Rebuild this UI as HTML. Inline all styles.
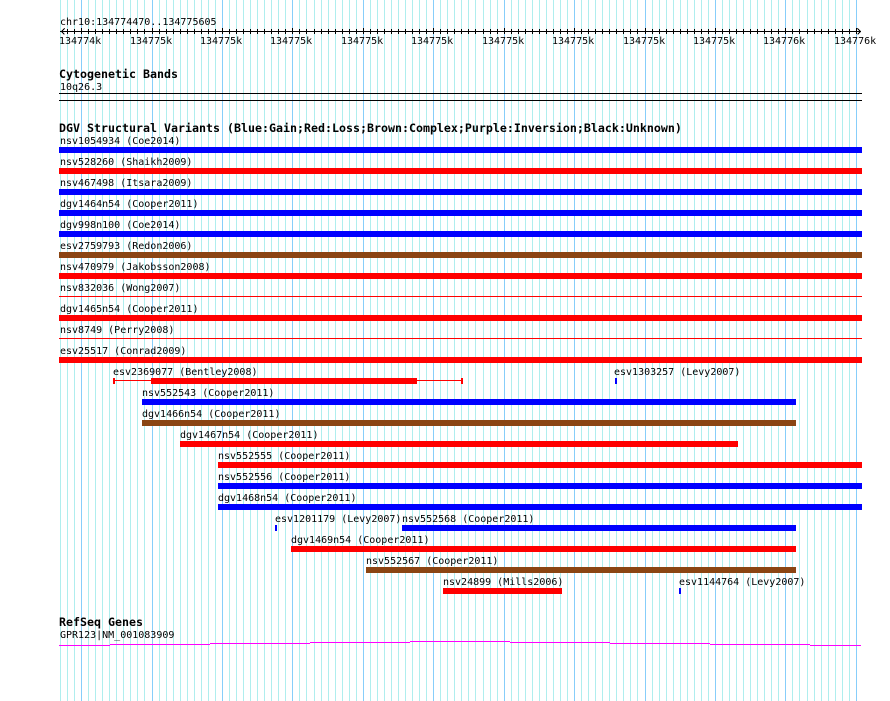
<!DOCTYPE html>
<html><head><meta charset="utf-8"><style>
html,body{margin:0;padding:0;background:#fff;width:890px;height:701px;overflow:hidden}
svg{display:block}
text{font-family:"DejaVu Sans Mono","Liberation Mono",monospace;font-size:10px;fill:#000;text-rendering:optimizeSpeed;-webkit-font-smoothing:none}
text.b{font-weight:bold;font-size:11.63px}
</style></head><body>
<svg width="890" height="701" viewBox="0 0 890 701" shape-rendering="crispEdges">
<path fill="none" stroke="#afeeee" d="M60.5 0V701M67.5 0V701M74.5 0V701M88.5 0V701M95.5 0V701M102.5 0V701M109.5 0V701M116.5 0V701M123.5 0V701M130.5 0V701M137.5 0V701M144.5 0V701M159.5 0V701M166.5 0V701M173.5 0V701M180.5 0V701M187.5 0V701M194.5 0V701M201.5 0V701M208.5 0V701M215.5 0V701M229.5 0V701M236.5 0V701M243.5 0V701M250.5 0V701M257.5 0V701M264.5 0V701M271.5 0V701M278.5 0V701M285.5 0V701M299.5 0V701M306.5 0V701M314.5 0V701M321.5 0V701M328.5 0V701M335.5 0V701M342.5 0V701M349.5 0V701M356.5 0V701M370.5 0V701M377.5 0V701M384.5 0V701M391.5 0V701M398.5 0V701M405.5 0V701M412.5 0V701M419.5 0V701M426.5 0V701M440.5 0V701M447.5 0V701M454.5 0V701M461.5 0V701M468.5 0V701M475.5 0V701M483.5 0V701M490.5 0V701M497.5 0V701M511.5 0V701M518.5 0V701M525.5 0V701M532.5 0V701M539.5 0V701M546.5 0V701M553.5 0V701M560.5 0V701M567.5 0V701M581.5 0V701M588.5 0V701M595.5 0V701M602.5 0V701M609.5 0V701M616.5 0V701M623.5 0V701M630.5 0V701M637.5 0V701M652.5 0V701M659.5 0V701M666.5 0V701M673.5 0V701M680.5 0V701M687.5 0V701M694.5 0V701M701.5 0V701M708.5 0V701M722.5 0V701M729.5 0V701M736.5 0V701M743.5 0V701M750.5 0V701M757.5 0V701M764.5 0V701M771.5 0V701M778.5 0V701M792.5 0V701M799.5 0V701M807.5 0V701M814.5 0V701M821.5 0V701M828.5 0V701M835.5 0V701M842.5 0V701M849.5 0V701"/>
<path fill="none" stroke="#87cefa" d="M81.5 0V701M152.5 0V701M222.5 0V701M292.5 0V701M363.5 0V701M433.5 0V701M504.5 0V701M574.5 0V701M645.5 0V701M715.5 0V701M785.5 0V701M856.5 0V701"/>

<!-- ruler -->
<path fill="none" stroke="#000" d="M60 31.5H861M64.5 28.5L61.5 31.5L64.5 34.5M857.5 28.5L860.5 31.5L857.5 34.5"/>
<path fill="none" stroke="#000" d="M67.5 29V34M74.5 29V34M88.5 29V34M95.5 29V34M102.5 29V34M109.5 29V34M116.5 29V34M123.5 29V34M130.5 29V34M137.5 29V34M144.5 29V34M159.5 29V34M166.5 29V34M173.5 29V34M180.5 29V34M187.5 29V34M194.5 29V34M201.5 29V34M208.5 29V34M215.5 29V34M229.5 29V34M236.5 29V34M243.5 29V34M250.5 29V34M257.5 29V34M264.5 29V34M271.5 29V34M278.5 29V34M285.5 29V34M299.5 29V34M306.5 29V34M314.5 29V34M321.5 29V34M328.5 29V34M335.5 29V34M342.5 29V34M349.5 29V34M356.5 29V34M370.5 29V34M377.5 29V34M384.5 29V34M391.5 29V34M398.5 29V34M405.5 29V34M412.5 29V34M419.5 29V34M426.5 29V34M440.5 29V34M447.5 29V34M454.5 29V34M461.5 29V34M468.5 29V34M475.5 29V34M483.5 29V34M490.5 29V34M497.5 29V34M511.5 29V34M518.5 29V34M525.5 29V34M532.5 29V34M539.5 29V34M546.5 29V34M553.5 29V34M560.5 29V34M567.5 29V34M581.5 29V34M588.5 29V34M595.5 29V34M602.5 29V34M609.5 29V34M616.5 29V34M623.5 29V34M630.5 29V34M637.5 29V34M652.5 29V34M659.5 29V34M666.5 29V34M673.5 29V34M680.5 29V34M687.5 29V34M694.5 29V34M701.5 29V34M708.5 29V34M722.5 29V34M729.5 29V34M736.5 29V34M743.5 29V34M750.5 29V34M757.5 29V34M764.5 29V34M771.5 29V34M778.5 29V34M792.5 29V34M799.5 29V34M807.5 29V34M814.5 29V34M821.5 29V34M828.5 29V34M835.5 29V34M842.5 29V34M849.5 29V34M81.5 28V34M152.5 28V34M222.5 28V34M292.5 28V34M363.5 28V34M433.5 28V34M504.5 28V34M574.5 28V34M645.5 28V34M715.5 28V34M785.5 28V34M856.5 28V34"/>
<text x="60" y="25">chr10:134774470..134775605</text>
<text x="59" y="44">134774k</text><text x="130" y="44">134775k</text><text x="200" y="44">134775k</text><text x="270" y="44">134775k</text><text x="341" y="44">134775k</text><text x="411" y="44">134775k</text><text x="482" y="44">134775k</text><text x="552" y="44">134775k</text><text x="623" y="44">134775k</text><text x="693" y="44">134775k</text><text x="763" y="44">134776k</text><text x="834" y="44">134776k</text>

<!-- cytobands -->
<text class="b" x="59" y="78">Cytogenetic Bands</text>
<text x="60" y="90">10q26.3</text>
<rect x="59" y="93" width="803" height="1" fill="#000"/>
<rect x="59" y="100" width="803" height="1" fill="#000"/>

<!-- DGV -->
<text class="b" x="59" y="132">DGV Structural Variants (Blue:Gain;Red:Loss;Brown:Complex;Purple:Inversion;Black:Unknown)</text>
<g fill="#00f">
<rect x="59" y="147" width="803" height="6"/><rect x="59" y="189" width="803" height="6"/><rect x="59" y="210" width="803" height="6"/><rect x="59" y="231" width="803" height="6"/>
<rect x="615" y="378" width="2" height="6"/><rect x="142" y="399" width="654" height="6"/><rect x="218" y="483" width="644" height="6"/><rect x="218" y="504" width="644" height="6"/><rect x="275" y="525" width="2" height="6"/><rect x="402" y="525" width="394" height="6"/><rect x="679" y="588" width="2" height="6"/>
</g>
<g fill="#f00">
<rect x="59" y="168" width="803" height="6"/><rect x="59" y="273" width="803" height="6"/><rect x="59" y="296" width="803" height="1"/><rect x="59" y="315" width="803" height="6"/><rect x="59" y="338" width="803" height="1"/><rect x="59" y="357" width="803" height="6"/>
<rect x="113" y="378" width="2" height="6"/><rect x="113" y="380" width="350" height="1"/><rect x="151" y="378" width="266" height="6"/><rect x="461" y="378" width="2" height="6"/>
<rect x="180" y="441" width="558" height="6"/><rect x="218" y="462" width="644" height="6"/><rect x="291" y="546" width="505" height="6"/><rect x="443" y="588" width="119" height="6"/>
</g>
<g fill="#8b4513">
<rect x="59" y="252" width="803" height="6"/><rect x="142" y="420" width="654" height="6"/><rect x="366" y="567" width="430" height="6"/>
</g>
<text x="60" y="144">nsv1054934 (Coe2014)</text>
<text x="60" y="165">nsv528260 (Shaikh2009)</text>
<text x="60" y="186">nsv467498 (Itsara2009)</text>
<text x="60" y="207">dgv1464n54 (Cooper2011)</text>
<text x="60" y="228">dgv998n100 (Coe2014)</text>
<text x="60" y="249">esv2759793 (Redon2006)</text>
<text x="60" y="270">nsv470979 (Jakobsson2008)</text>
<text x="60" y="291">nsv832036 (Wong2007)</text>
<text x="60" y="312">dgv1465n54 (Cooper2011)</text>
<text x="60" y="333">nsv8749 (Perry2008)</text>
<text x="60" y="354">esv25517 (Conrad2009)</text>
<text x="113" y="375">esv2369077 (Bentley2008)</text>
<text x="614" y="375">esv1303257 (Levy2007)</text>
<text x="142" y="396">nsv552543 (Cooper2011)</text>
<text x="142" y="417">dgv1466n54 (Cooper2011)</text>
<text x="180" y="438">dgv1467n54 (Cooper2011)</text>
<text x="218" y="459">nsv552555 (Cooper2011)</text>
<text x="218" y="480">nsv552556 (Cooper2011)</text>
<text x="218" y="501">dgv1468n54 (Cooper2011)</text>
<text x="275" y="522">esv1201179 (Levy2007)</text>
<text x="402" y="522">nsv552568 (Cooper2011)</text>
<text x="291" y="543">dgv1469n54 (Cooper2011)</text>
<text x="366" y="564">nsv552567 (Cooper2011)</text>
<text x="443" y="585">nsv24899 (Mills2006)</text>
<text x="679" y="585">esv1144764 (Levy2007)</text>

<!-- RefSeq -->
<text class="b" x="59" y="626">RefSeq Genes</text>
<text x="60" y="638">GPR123|NM_001083909</text>
<g fill="#f0f">
<rect x="59" y="645" width="51" height="1"/><rect x="110" y="644" width="100" height="1"/><rect x="210" y="643" width="100" height="1"/><rect x="310" y="642" width="100" height="1"/><rect x="410" y="641" width="100" height="1"/><rect x="510" y="642" width="100" height="1"/><rect x="610" y="643" width="100" height="1"/><rect x="710" y="644" width="100" height="1"/><rect x="810" y="645" width="51" height="1"/>
</g>
</svg>
</body></html>
